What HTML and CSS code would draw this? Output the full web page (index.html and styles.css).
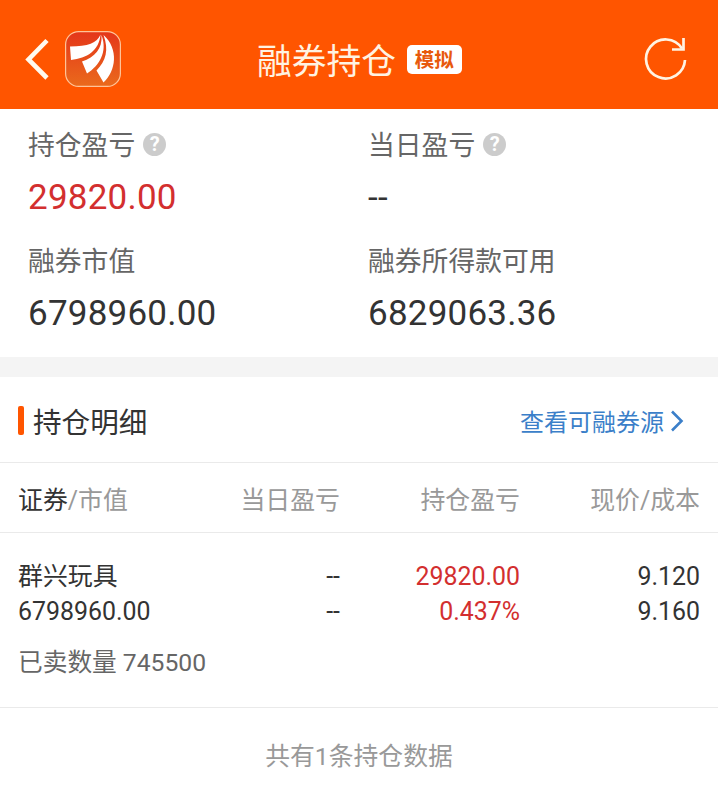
FILE: index.html
```html
<!DOCTYPE html>
<html lang="zh-CN">
<head>
<meta charset="utf-8">
<meta name="viewport" content="width=device-width">
<title>融券持仓</title>
<link rel="stylesheet" href="styles.css">
</head>
<body>
<header class="topbar">
  <div class="topbar-left">
    <svg class="back" width="26" height="44" viewBox="0 0 26 44"><path d="M24 3.500 5.500 22.500l18.500 18.500" fill="none" stroke="#fffaf0" stroke-width="4.600"/></svg>
    <svg class="logo" width="56" height="56" viewBox="0 0 56 56">
      <defs><linearGradient id="logo-bg" x1="0" y1="0" x2="0" y2="1"><stop offset="0" stop-color="#e4361a"/><stop offset="1" stop-color="#ea6a1c"/></linearGradient></defs>
      <rect x=".6" y=".6" width="54.8" height="54.8" rx="13" fill="url(#logo-bg)" stroke="#ffc398" stroke-width="1.2"/>
      <path d="M35.500 3.500C32 12 23 15.500 5 15.500L6 29C22 27 34 20 35.500 3.500Z" fill="#fff"/>
      <path d="M36.500 4C37.500 18 30 26 17 30.500L22 42.500C34 35 43 21 36.500 4Z" fill="#fff"/>
      <path d="M38.500 4C44 19 41 30 31.500 39.500L38.500 51.500C51 40 54 18 38.500 4Z" fill="#fff"/>
    </svg>
  </div>
  <div class="topbar-title"><h1>融券持仓</h1><span class="badge">模拟</span></div>
  <svg class="refresh" width="48" height="48" viewBox="0 0 48 48" fill="none" stroke="#fff3e2" stroke-width="2.700"><path d="M43 25A19.500 19.500 0 1 1 40 13.500"/><path d="M41.500 3V14.500H30"/></svg>
</header>

<section class="summary">
  <div class="metric">
    <div class="label">持仓盈亏<span class="help">?</span></div>
    <div class="value up">29820.00</div>
  </div>
  <div class="metric">
    <div class="label">当日盈亏<span class="help">?</span></div>
    <div class="value">--</div>
  </div>
  <div class="metric">
    <div class="label">融券市值</div>
    <div class="value">6798960.00</div>
  </div>
  <div class="metric">
    <div class="label">融券所得款可用</div>
    <div class="value">6829063.36</div>
  </div>
</section>

<section class="detail">
  <div class="detail-head">
    <h2>持仓明细</h2>
    <a class="source"><span>查看可融券源</span><svg width="14" height="22" viewBox="0 0 14 22"><path d="M2 1.500 11.500 11 2 20.500" fill="none" stroke="#3b7fc9" stroke-width="2.600"/></svg></a>
  </div>
  <div class="grid columns">
    <div><b>证券</b>/市值</div><div>当日盈亏</div><div>持仓盈亏</div><div>现价/成本</div>
  </div>
  <div class="holding">
    <div class="grid">
      <div>群兴玩具</div><div>--</div><div class="up">29820.00</div><div>9.120</div>
      <div>6798960.00</div><div>--</div><div class="up">0.437%</div><div>9.160</div>
    </div>
    <div class="sold">已卖数量 745500</div>
  </div>
</section>
<footer>共有1条持仓数据</footer>
</body>
</html>
```
FILE: styles.css
```css
* { box-sizing: border-box; }
body {
  margin: 0;
  background: #fff;
  color: #333;
  font-family: Roboto, "Noto Sans CJK SC", sans-serif;
  font-weight: 400;
}
h1, h2, b { margin: 0; font-weight: 400; }
svg { display: block; flex: none; }

.topbar {
  display: grid;
  grid-template-columns: 1fr auto 1fr;
  align-items: center;
  height: 109px;
  padding: 9px 28px 0 23px;
  background: #ff5500;
}
.topbar-left { display: flex; align-items: center; gap: 16px; }
.topbar-title { display: flex; align-items: center; gap: 11px; margin-left: 3px; margin-right: -3px; color: #fff3e2; }
h1 { font-size: 34.7px; line-height: 48px; padding-top: 5px; }
.badge {
  width: 55px;
  height: 29px;
  margin-top: 1px;
  border-radius: 5px;
  background: #fff;
  color: #e8590c;
  font-size: 19.5px;
  font-weight: 700;
  line-height: 32px;
  text-align: center;
}
.refresh { justify-self: end; }

.summary {
  display: grid;
  grid-template-columns: 340px 1fr;
  row-gap: 26px;
  height: 248px;
  padding: 19px 0 23px 28px;
}
.label {
  display: flex;
  align-items: center;
  gap: 8px;
  height: 36px;
  color: #666;
  font-size: 26.8px;
  line-height: 36px;
}
.help {
  width: 23px;
  height: 23px;
  margin-bottom: 3px;
  border-radius: 50%;
  background: #ccc;
  color: #fff;
  font-size: 20px;
  font-weight: 700;
  line-height: 23px;
  text-align: center;
}
.value { margin-top: 12px; padding-top: 1px; height: 42px; font-size: 35px; line-height: 42px; letter-spacing: .22px; }
.up { color: #d32f2f; }

.detail { border-top: 20px solid #f4f4f4; }
.detail-head {
  display: flex;
  align-items: center;
  justify-content: space-between;
  height: 86px;
  padding: 2px 34px 0 18px;
  border-bottom: 1px solid #eaeaea;
}
h2 { display: flex; align-items: center; gap: 9px; padding-top: 4px; font-size: 28.6px; line-height: 40px; }
h2::before { content: ""; width: 6px; height: 29px; margin-bottom: 4px; border-radius: 2px; background: #ff5500; }
.source { display: flex; align-items: center; gap: 6px; color: #3b7fc9; font-size: 24px; line-height: 36px; }
.source span { padding-top: 4px; }

.grid {
  display: grid;
  grid-template-columns: 172px 150px 180px 180px;
  font-size: 24.9px;
  line-height: 35px;
}
.grid > div { text-align: right; }
.grid > div:nth-child(4n + 1) { text-align: left; }
.columns {
  height: 70px;
  padding: 20px 18px 0;
  color: #999;
  border-bottom: 1px solid #eaeaea;
}
.columns b { color: #333; }
.holding { height: 175px; padding: 26px 18px 0; border-bottom: 1px solid #eaeaea; }
.sold { margin-top: 16px; color: #666; font-size: 24.7px; line-height: 35px; }
footer { padding-top: 31px; color: #999; font-size: 24.8px; line-height: 36px; text-align: center; }
```
